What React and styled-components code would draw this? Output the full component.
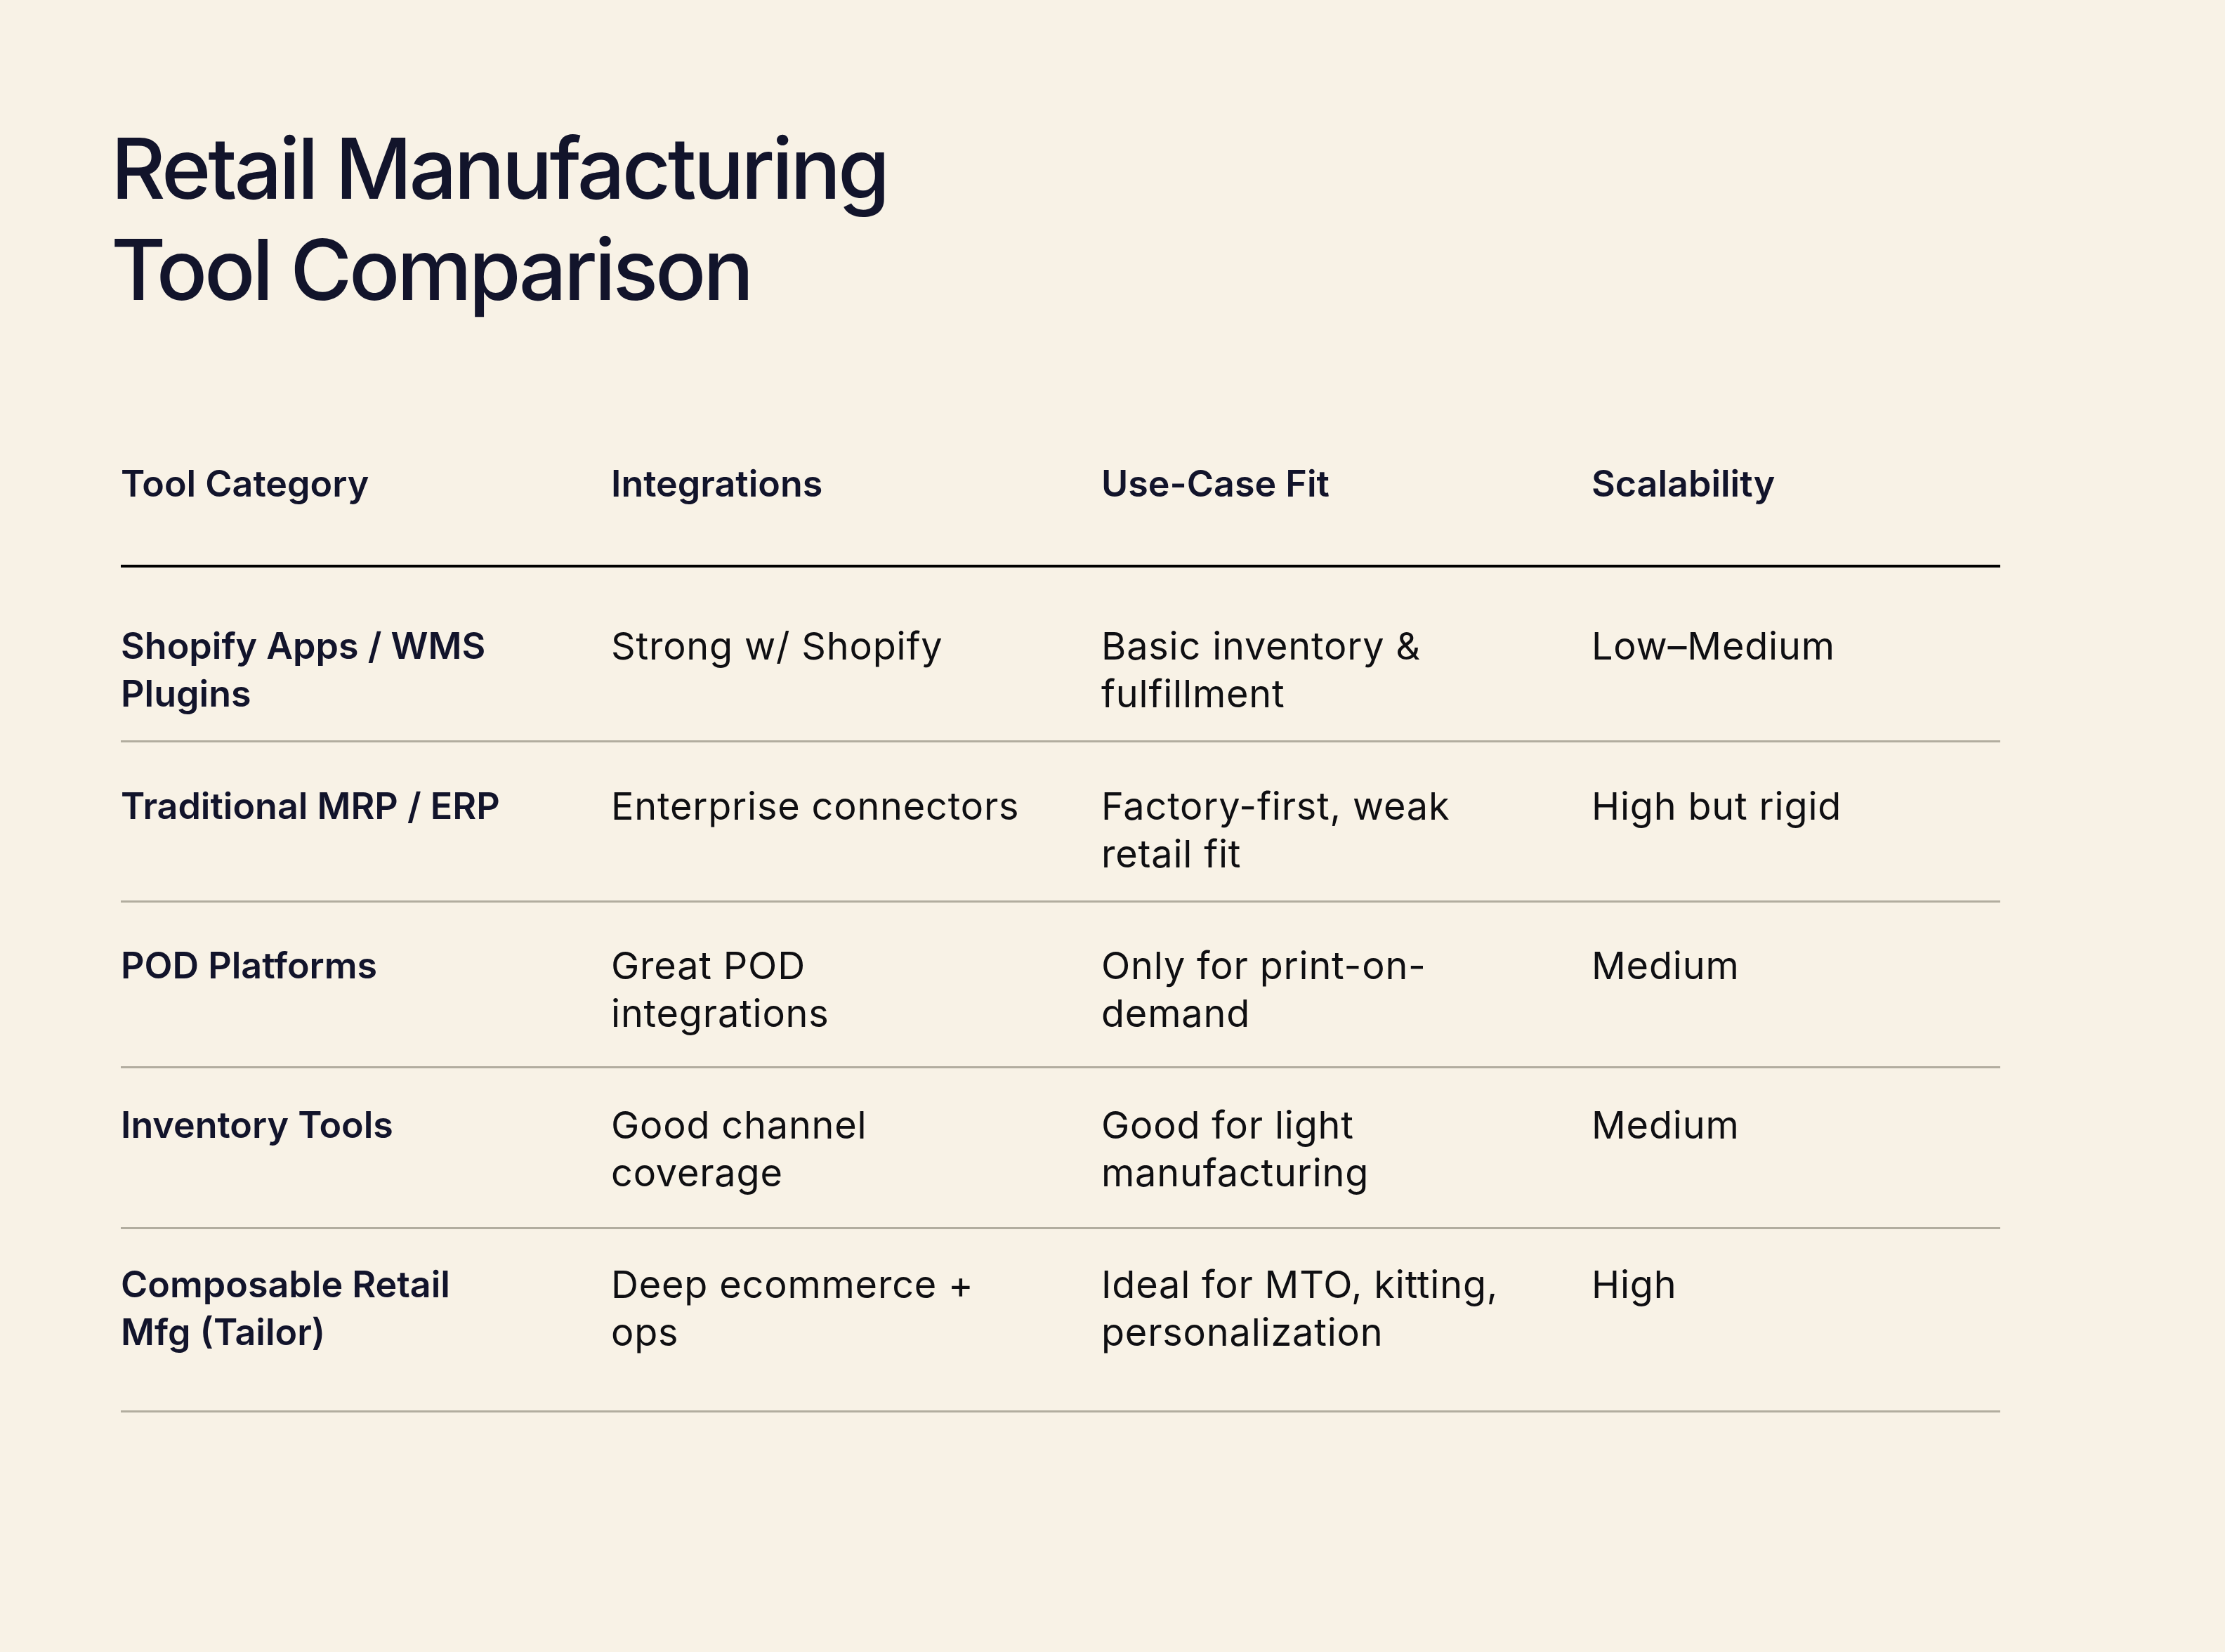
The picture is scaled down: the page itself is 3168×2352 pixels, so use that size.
import React from 'react';
import styled, { createGlobalStyle } from 'styled-components';

const GlobalStyle = createGlobalStyle`
  html, body {
    margin: 0;
    padding: 0;
    background: #f8f2e6;
  }
  body {
    font-family: Inter, "Noto Sans", sans-serif;
    -webkit-font-smoothing: antialiased;
  }
`;

const Page = styled.main`
  width: 3168px;
  height: 2352px;
  box-sizing: border-box;
  background: #f8f2e6;
  padding: 168px 0 0 158px;
`;

const Title = styled.h1`
  margin: 0;
  font-family: Inter, "Noto Sans", sans-serif;
  font-size: 120px;
  line-height: 144px;
  font-weight: 500;
  letter-spacing: -0.035em;
  color: #12142b;
`;

const Table = styled.div`
  margin: 199px 0 0 14px;
  width: 2676px;
`;

const Row = styled.div`
  display: grid;
  grid-template-columns: 590px 590px 590px 1fr;
  column-gap: 108px;
  padding: ${(p) => p.$top}px 0 ${(p) => p.$bottom}px;
  border-bottom: ${(p) => (p.$head ? '4px solid #000000' : '3px solid #b2ad9f')};
`;

const HeadCell = styled.div`
  font-size: 52px;
  line-height: 68px;
  font-weight: 600;
  color: #12142b;
`;

const NameCell = styled.div`
  max-width: 560px;
  font-size: 52px;
  line-height: 68px;
  font-weight: 600;
  color: #12142b;
`;

const ValueCell = styled.div`
  font-size: 54px;
  line-height: 68px;
  font-weight: 400;
  letter-spacing: 0.015em;
  color: #0f0f12;
`;

const headers = ['Tool Category', 'Integrations', 'Use-Case Fit', 'Scalability'];

const rows = [
  { name: 'Shopify Apps / WMS Plugins', integ: 'Strong w/ Shopify', fit: 'Basic inventory & fulfillment', scale: 'Low–Medium', top: 78, bottom: 32 },
  { name: 'Traditional MRP / ERP', integ: 'Enterprise connectors', fit: 'Factory-first, weak retail fit', scale: 'High but rigid', top: 57, bottom: 32 },
  { name: 'POD Platforms', integ: 'Great POD integrations', fit: 'Only for print-on-demand', scale: 'Medium', top: 56, bottom: 41 },
  { name: 'Inventory Tools', integ: 'Good channel coverage', fit: 'Good for light manufacturing', scale: 'Medium', top: 47, bottom: 43 },
  { name: 'Composable Retail Mfg (Tailor)', integ: 'Deep ecommerce + ops', fit: 'Ideal for MTO, kitting, personalization', scale: 'High', top: 45, bottom: 77 },
];

export default function App() {
  return (
    <>
      <GlobalStyle />
      <Page>
        <Title>
          Retail Manufacturing
          <br />
          Tool Comparison
        </Title>
        <Table>
          <Row $head $top={0} $bottom={81}>
            {headers.map((h) => (
              <HeadCell key={h}>{h}</HeadCell>
            ))}
          </Row>
          {rows.map((r) => (
            <Row key={r.name} $top={r.top} $bottom={r.bottom}>
              <NameCell>{r.name}</NameCell>
              <ValueCell>{r.integ}</ValueCell>
              <ValueCell>{r.fit}</ValueCell>
              <ValueCell>{r.scale}</ValueCell>
            </Row>
          ))}
        </Table>
      </Page>
    </>
  );
}
